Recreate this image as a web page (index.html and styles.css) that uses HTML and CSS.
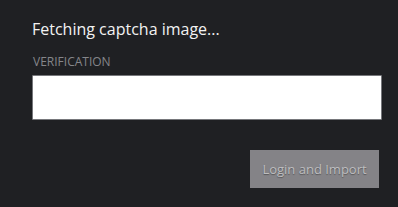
FILE: index.html
```html
<!DOCTYPE html>
<html lang="en">
<head>
    <meta charset="UTF-8">
    <meta name="viewport" content="width=device-width, initial-scale=1.0">
    <title>Captcha Login</title>
    <link rel="stylesheet" href="styles.css">
</head>
<body>

    <main class="captcha-form">
        <p class="status">Fetching captcha image...</p>
        <label class="field-label" for="verification">VERIFICATION</label>
        <input type="text" id="verification" class="field-input">
        <div class="actions">
            <button class="import-button" disabled>Login and Import</button>
        </div>
    </main>

</body>
</html>
```

FILE: styles.css
```css
body {
    font-family: "Open Sans", sans-serif;
    background-color: #1f2023;
    margin: 0;
    padding: 0;
}

.captcha-form {
    padding: 14px 16px 0 32px;
    display: flex;
    flex-direction: column;
}

.status {
    margin: 0;
    color: #f2f2f2;
    font-size: 16px;
    line-height: 30px;
}

.field-label {
    margin-top: 9px;
    padding-left: 1px;
    color: #85868a;
    font-size: 12px;
    line-height: 17px;
}

.field-input {
    margin-top: 5px;
    height: 45px;
    box-sizing: border-box;
    background-color: #fff;
    border: 1px solid #76777b;
    border-radius: 1px;
    padding: 0 10px;
    font-size: 14px;
}

.actions {
    display: flex;
    justify-content: flex-end;
    margin-top: 30px;
    padding-right: 3px;
}

.import-button {
    width: 129px;
    height: 38px;
    background-color: #848387;
    color: #bdbdbf;
    border: none;
    border-radius: 0;
    font-family: "Open Sans", sans-serif;
    font-size: 13px;
    text-shadow: 0 1px 1px rgba(0, 0, 0, 0.35);
    padding: 0;
}
```
